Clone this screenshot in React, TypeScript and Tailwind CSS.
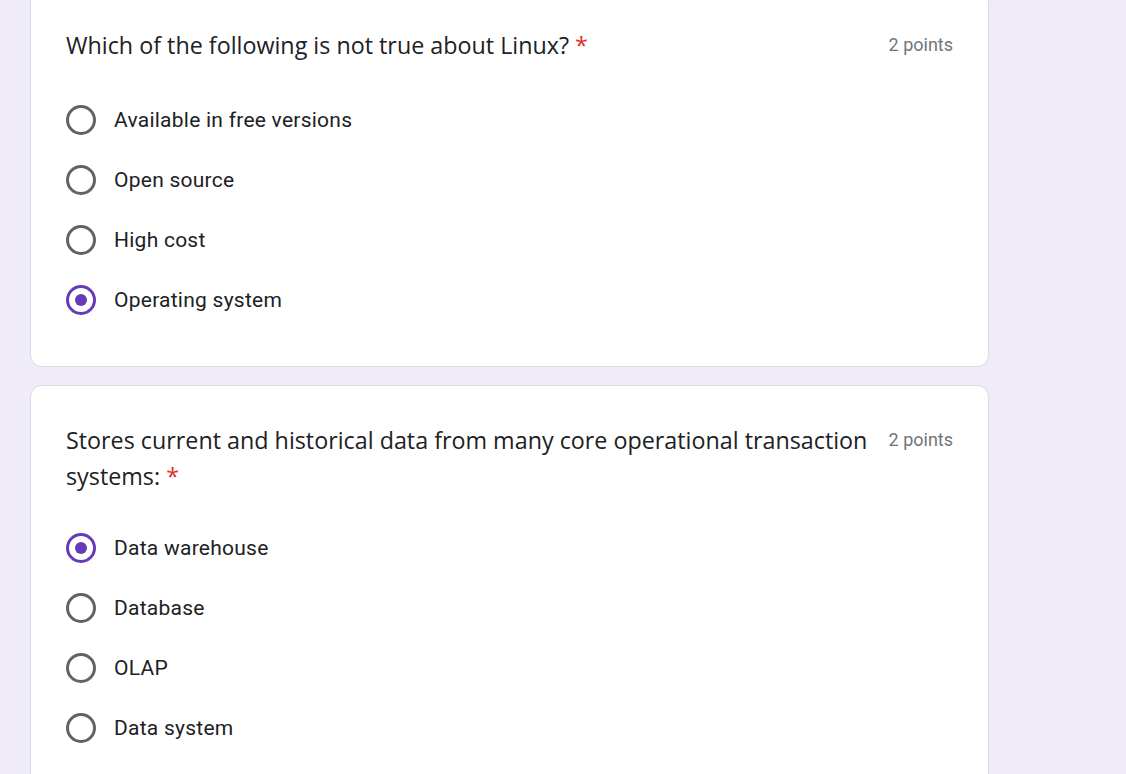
import React from "react";

type Q = {
  title: string;
  options: string[];
  selected: number;
  gap: string;
  extra: string;
};

const questions: Q[] = [
  {
    title: "Which of the following is not true about Linux?",
    options: ["Available in free versions", "Open source", "High cost", "Operating system"],
    selected: 3,
    gap: "mt-[27px]",
    extra: "-mt-[10px]",
  },
  {
    title: "Stores current and historical data from many core operational transaction systems:",
    options: ["Data warehouse", "Database", "OLAP", "Data system"],
    selected: 0,
    gap: "mt-[24px]",
    extra: "mt-[18px]",
  },
];

function Radio({ on }: { on: boolean }) {
  return on ? (
    <div className="w-[30px] h-[30px] shrink-0 rounded-full border-[3px] border-[#673ab7] flex items-center justify-center">
      <div className="w-[12px] h-[12px] rounded-full bg-[#673ab7]" />
    </div>
  ) : (
    <div className="w-[30px] h-[30px] shrink-0 rounded-full border-[3px] border-[#5f6368]" />
  );
}

function Card({ q }: { q: Q }) {
  return (
    <div
      className={`${q.extra} w-[959px] bg-white border border-[#dadce0] rounded-[12px] pt-[36px] pb-[36px] px-[35px]`}
    >
      <div className="flex justify-between items-start">
        <div
          className="flex-1 text-[23.3px] leading-[36px] text-[#202124]"
          style={{ fontFamily: '"Open Sans", "Noto Sans", sans-serif' }}
        >
          {q.title} <span className="text-[#d93025]">*</span>
        </div>
        <div
          className="ml-[14px] whitespace-nowrap text-[18px] leading-[36px] text-[#70757a]"
          style={{ fontFamily: 'Roboto, "Liberation Sans", sans-serif' }}
        >
          2 points
        </div>
      </div>
      <div className={q.gap}>
        {q.options.map((o, i) => (
          <div key={o} className="h-[60px] flex items-center gap-[18px]">
            <Radio on={i === q.selected} />
            <span
              className="pt-[2px] text-[21px] text-[#202124] tracking-[0.25px]"
              style={{ fontFamily: 'Roboto, "Liberation Sans", sans-serif' }}
            >
              {o}
            </span>
          </div>
        ))}
      </div>
    </div>
  );
}

export default function App() {
  return (
    <div className="w-[1126px] h-[774px] overflow-hidden bg-[#f0ebf8] pl-[30px]">
      {questions.map((q) => (
        <Card key={q.title} q={q} />
      ))}
    </div>
  );
}
